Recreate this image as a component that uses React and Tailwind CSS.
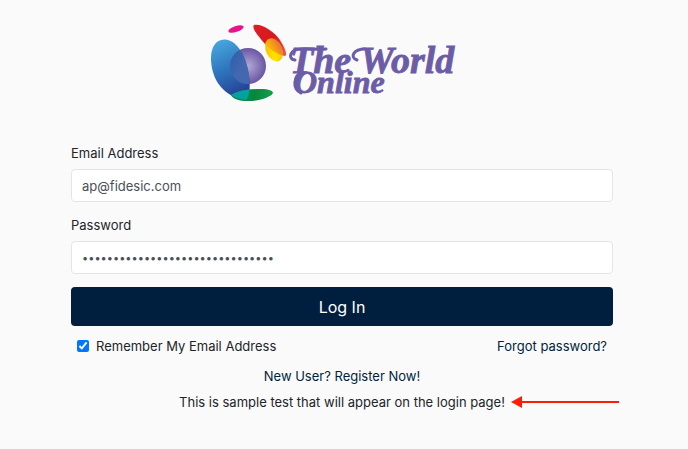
import { useState } from "react";

const BLUE = "M11 16C23 12 35 28 38 46C41 60 40 72 36 76C20 74 7 63 3 48C-1 33 1 19 11 16Z";
const RED = "M44 1C51 -1 64 7 70 16C75 24 78 31 75 32C69 32 56 23 50 14C45 8 42 3 44 1Z";

function Logo() {
    return (
        <svg role="img" aria-label="The World Online" width="248" height="80" viewBox="0 0 248 80" className="mr-4 overflow-visible">
            <defs>
                <linearGradient id="blue" x1="0.3" y1="0" x2="0.6" y2="1">
                    <stop offset="0" stopColor="#48a5dd" />
                    <stop offset="0.45" stopColor="#2f78bf" />
                    <stop offset="1" stopColor="#233b91" />
                </linearGradient>
                <radialGradient id="purple" cx="0.5" cy="0.5" r="0.5">
                    <stop offset="0" stopColor="#b3a9d6" />
                    <stop offset="1" stopColor="#6a55a3" />
                </radialGradient>
                <linearGradient id="overlap" x1="0" y1="0" x2="0.5" y2="0.3">
                    <stop offset="0" stopColor="#2c5cab" />
                    <stop offset="1" stopColor="#4368b0" />
                </linearGradient>
                <linearGradient id="red" x1="0" y1="0" x2="1" y2="1">
                    <stop offset="0" stopColor="#df1d25" />
                    <stop offset="0.5" stopColor="#d7191f" />
                    <stop offset="1" stopColor="#ee604c" />
                </linearGradient>
                <linearGradient id="yellow" x1="0" y1="0" x2="1" y2="1">
                    <stop offset="0" stopColor="#f8b300" />
                    <stop offset="0.6" stopColor="#ffe600" />
                    <stop offset="1" stopColor="#f4b400" />
                </linearGradient>
                <linearGradient id="orange" x1="0" y1="0.5" x2="1" y2="0.3">
                    <stop offset="0" stopColor="#fbc400" />
                    <stop offset="0.5" stopColor="#f8a510" />
                    <stop offset="1" stopColor="#e5713a" />
                </linearGradient>
                <linearGradient id="green" x1="0" y1="0" x2="1" y2="0">
                    <stop offset="0" stopColor="#00954b" />
                    <stop offset="0.55" stopColor="#07863e" />
                    <stop offset="1" stopColor="#14a04a" />
                </linearGradient>
                <clipPath id="blueShape">
                    <path d={BLUE} />
                </clipPath>
                <clipPath id="redShape">
                    <path d={RED} />
                </clipPath>
            </defs>
            <ellipse cx="26" cy="5" rx="8" ry="3" fill="#e6148b" transform="rotate(-18 26 5)" />
            <circle cx="38" cy="42" r="18" fill="url(#purple)" />
            <path d={BLUE} fill="url(#blue)" />
            <path d="M21 71C27 67 38 65 51 65C59 65 63 67 63 69C61 73 50 77 38 77C29 77 23 75 21 71Z" fill="url(#green)" />
            <g clipPath="url(#blueShape)">
                <circle cx="38" cy="42" r="18" fill="url(#overlap)" />
                <path d="M21 71C27 67 38 65 51 65V77H38C29 77 23 75 21 71Z" fill="#05a0a0" />
            </g>
            <path d={RED} fill="url(#red)" />
            <ellipse cx="64" cy="26" rx="8" ry="12" fill="url(#yellow)" transform="rotate(-25 64 26)" />
            <g clipPath="url(#redShape)">
                <ellipse cx="64" cy="26" rx="8" ry="12" fill="url(#orange)" transform="rotate(-25 64 26)" />
            </g>
            <g className="fill-[#6c5ca7] font-['Liberation_Serif',serif] font-bold italic" stroke="#6c5ca7" strokeWidth="0.8">
                <text x="80" y="49" fontSize="38">The World</text>
                <text x="84" y="69" fontSize="32">Online</text>
            </g>
            <g fill="none" stroke="#6c5ca7" strokeWidth="3" strokeLinecap="round">
                <path d="M85 36C77 35 80 25 91 25C99 24 106 26 116 25" />
                <path d="M147 36C139 33 144 25 155 25" />
                <path d="M93 48C83 51 82 66 91 69" />
            </g>
        </svg>
    );
}

function Field({ id, label, inputClass, ...props }) {
    return (
        <div className="mb-[13px]">
            <label htmlFor={id} className="mb-1.5 block leading-5">{label}</label>
            <input
                id={id}
                className={`block h-[33px] w-full rounded border border-[#e3e5e8] bg-white px-2.5 text-[#495057] outline-none ${inputClass}`}
                {...props}
            />
        </div>
    );
}

export default function App() {
    const [email, setEmail] = useState("ap@fidesic.com");
    const [password, setPassword] = useState("samplepasswordforloginpage12345");
    const [remember, setRemember] = useState(true);

    return (
        <main className="min-h-screen bg-[#fafafa] pr-[75px] pl-[71px] pt-6 font-[Inter,sans-serif] text-[13px] text-[#212529]">
            <div className="mb-[39px] flex justify-center">
                <Logo />
            </div>

            <form onSubmit={(e) => e.preventDefault()}>
                <Field
                    id="email"
                    label="Email Address"
                    type="email"
                    inputClass="text-[13px]"
                    value={email}
                    onChange={(e) => setEmail(e.target.value)}
                />
                <Field
                    id="password"
                    label="Password"
                    type="password"
                    inputClass="text-[11px]"
                    value={password}
                    onChange={(e) => setPassword(e.target.value)}
                />

                <button type="submit" className="block h-[39px] w-full rounded bg-[#001f3f] text-base text-white">
                    Log In
                </button>

                <div className="mt-2.5 flex items-center justify-between px-1.5 leading-5">
                    <label className="flex items-center gap-[7px]">
                        <input
                            type="checkbox"
                            className="size-3 accent-[#0075ff]"
                            checked={remember}
                            onChange={(e) => setRemember(e.target.checked)}
                        />
                        Remember My Email Address
                    </label>
                    <a href="#forgot" className="text-[#001f3f]">Forgot password?</a>
                </div>
            </form>

            <div className="mt-2.5 text-center leading-5">
                <a href="#register" className="text-[#001f3f]">New User? Register Now!</a>
            </div>
            <div className="mt-1.5 flex justify-center leading-5">
                <p className="relative">
                    This is sample test that will appear on the login page!
                    <svg aria-hidden="true" width="108" height="12" viewBox="0 0 108 12" className="absolute top-1 left-full ml-1.5">
                        <path d="M10 6H108" stroke="#fb1d08" strokeWidth="2" />
                        <path d="M0 6L11 0V12Z" fill="#fb1d08" />
                    </svg>
                </p>
            </div>
        </main>
    );
}
